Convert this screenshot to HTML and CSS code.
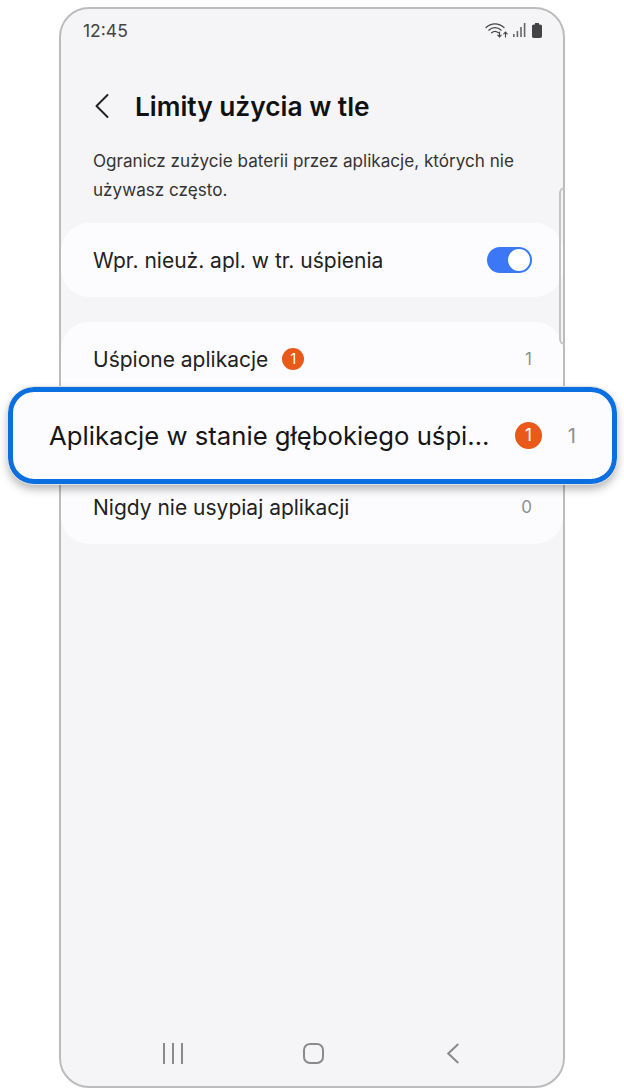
FILE: index.html
```html
<!DOCTYPE html>
<html lang="pl">
<head>
    <meta charset="UTF-8">
    <meta name="viewport" content="width=device-width, initial-scale=1.0">
    <title>Limity użycia w tle</title>
    <link rel="stylesheet" href="styles.css">
</head>
<body>
    <div class="phone">
        <div class="side-button"></div>
        <div class="status-bar">
            <span class="clock">12:45</span>
            <div class="status-icons">
                <svg width="24" height="16" viewBox="0 0 24 16" fill="none" stroke="#444" stroke-linecap="round">
                    <path d="M1 5.500C6 .6 14 .6 19 5.500" stroke-width="1.200"/>
                    <path d="M3.800 8.200C7.400 4.800 12.600 4.800 16.200 8.200" stroke-width="1.200"/>
                    <path d="M6.600 10.800C8.600 9 11.400 9 13.400 10.800" stroke-width="1.200"/>
                    <path d="M14.500 10v5M12.800 13.200l1.700 1.800 1.700-1.800M20.500 15v-5M18.800 11.800l1.700-1.800 1.700 1.800" stroke-width="1.100"/>
                </svg>
                <svg width="13" height="14" viewBox="0 0 13 14" fill="#666">
                    <rect x="0" y="11" width="1.600" height="3"/>
                    <rect x="3.600" y="8" width="1.600" height="6"/>
                    <rect x="7.200" y="4" width="1.600" height="10"/>
                    <rect x="10.800" y="0" width="1.600" height="14"/>
                </svg>
                <svg class="battery" width="10" height="15" viewBox="0 0 10 15" fill="#444">
                    <path d="M3 0h4v1.500h1.200c1 0 1.800.8 1.800 1.800v10c0 1-.8 1.700-1.800 1.700H1.800C.8 15 0 14.300 0 13.300v-10c0-1 .8-1.800 1.800-1.800H3z"/>
                </svg>
            </div>
        </div>

        <div class="title-bar">
            <svg class="back" width="16" height="26" viewBox="0 0 16 26" fill="none" stroke="#222" stroke-width="2" stroke-linecap="round" stroke-linejoin="round">
                <path d="M13.500 2 2.500 13l11 11"/>
            </svg>
            <h1>Limity użycia w tle</h1>
        </div>

        <p class="intro">Ogranicz zużycie baterii przez aplikacje, których nie używasz często.</p>

        <div class="card">
            <div class="row">
                <span class="row-label">Wpr. nieuż. apl. w tr. uśpienia</span>
                <div class="switch"><div class="knob"></div></div>
            </div>
        </div>

        <div class="card">
            <div class="row">
                <span class="row-label">Uśpione aplikacje</span>
                <span class="badge">1</span>
                <span class="count">1</span>
            </div>
            <!-- this row sits under the callout -->
            <div class="row"></div>
            <div class="row">
                <span class="row-label">Nigdy nie usypiaj aplikacji</span>
                <span class="count">0</span>
            </div>
        </div>

        <div class="nav-bar">
            <svg width="20" height="21" viewBox="0 0 20 21" fill="none" stroke="#8a8a8a" stroke-width="2">
                <path d="M1 0v21M10 0v21M19 0v21"/>
            </svg>
            <svg class="nav-home" width="21" height="21" viewBox="0 0 21 21" fill="none" stroke="#8a8a8a" stroke-width="2">
                <rect x="1" y="1" width="19" height="19" rx="6"/>
            </svg>
            <svg width="12" height="21" viewBox="0 0 12 21" fill="none" stroke="#8a8a8a" stroke-width="2">
                <path d="M11.300 1 1.300 10.500l10 9.500"/>
            </svg>
        </div>
    </div>

    <div class="callout">
        <span class="callout-label">Aplikacje w stanie głębokiego uśpi…</span>
        <span class="callout-badge">1</span>
        <span class="callout-count">1</span>
    </div>
</body>
</html>
```

FILE: styles.css
```css
body {
    margin: 0;
    background-color: white;
    font-family: "Inter", "Roboto", sans-serif;
}
.phone {
    position: relative;
    box-sizing: border-box;
    width: 506px;
    height: 1081px;
    margin: 7px 0 0 59px;
    display: flex;
    flex-direction: column;
    background-color: #f5f5f7;
    border: 2px solid #bcbcbc;
    border-radius: 30px;
}
.side-button {
    position: absolute;
    right: -2px;
    top: 178px;
    width: 6px;
    height: 158px;
    border: 2px solid #c4c4c4;
    border-right: none;
    border-radius: 6px 0 0 6px;
    box-sizing: border-box;
}
.status-bar {
    display: flex;
    justify-content: space-between;
    align-items: center;
    height: 16px;
    margin-top: 13px;
    padding: 0 21px 0 22px;
}
.clock {
    font-size: 17.500px;
    color: #444;
}
.status-icons {
    display: flex;
    align-items: center;
    gap: 4px;
}
.battery {
    margin-left: 2px;
}
.title-bar {
    display: flex;
    align-items: center;
    height: 34px;
    margin-top: 51px;
    padding-left: 33px;
}
.back {
    margin-right: 25px;
}
h1 {
    margin: 0;
    font-size: 26.300px;
    font-weight: 600;
    color: #111;
}
.intro {
    margin: 23px 30px 0 32px;
    font-size: 17.100px;
    line-height: 29px;
    color: #333;
}
.card {
    background-color: #fcfcfe;
    border-radius: 28px;
    margin-bottom: 25px;
}
.intro + .card {
    margin-top: 19px;
}
.row {
    display: flex;
    align-items: center;
    height: 74px;
    padding: 0 31px 0 32px;
}
.row-label {
    font-size: 21px;
    color: #222;
    white-space: nowrap;
}
.badge {
    width: 22px;
    height: 22px;
    margin-left: 14px;
    border-radius: 50%;
    background-color: #e8591a;
    color: white;
    font-size: 14px;
    line-height: 22px;
    text-align: center;
}
.count {
    margin-left: auto;
    font-size: 17px;
    color: #8f8f8f;
}
.switch {
    box-sizing: border-box;
    width: 45px;
    height: 26px;
    margin-left: auto;
    padding: 2px;
    display: flex;
    justify-content: flex-end;
    border-radius: 13px;
    background-color: #3c78f5;
}
.knob {
    width: 22px;
    height: 22px;
    border-radius: 50%;
    background-color: white;
}
.nav-bar {
    display: flex;
    align-items: center;
    margin-top: auto;
    margin-bottom: 22px;
    padding-left: 102px;
}
.nav-home {
    margin: 0 123px 0 120px;
}
.callout {
    position: absolute;
    left: 8px;
    top: 387px;
    box-sizing: border-box;
    width: 609px;
    height: 97px;
    display: flex;
    align-items: center;
    padding: 0 36px 0 36px;
    background-color: #fcfcfe;
    border: 5px solid #0a6fe0;
    border-radius: 26px;
    outline: 1px solid #e2e2e2;
    box-shadow: 0 5px 10px rgba(0,0,0,0.3);
}
.callout-label {
    font-size: 25.700px;
    color: #161616;
    white-space: nowrap;
}
.callout-badge {
    width: 27px;
    height: 27px;
    margin-left: auto;
    border-radius: 50%;
    background-color: #e8591a;
    color: white;
    font-size: 17px;
    line-height: 27px;
    text-align: center;
}
.callout-count {
    margin-left: 26px;
    font-size: 20px;
    color: #8f8f8f;
}
```
